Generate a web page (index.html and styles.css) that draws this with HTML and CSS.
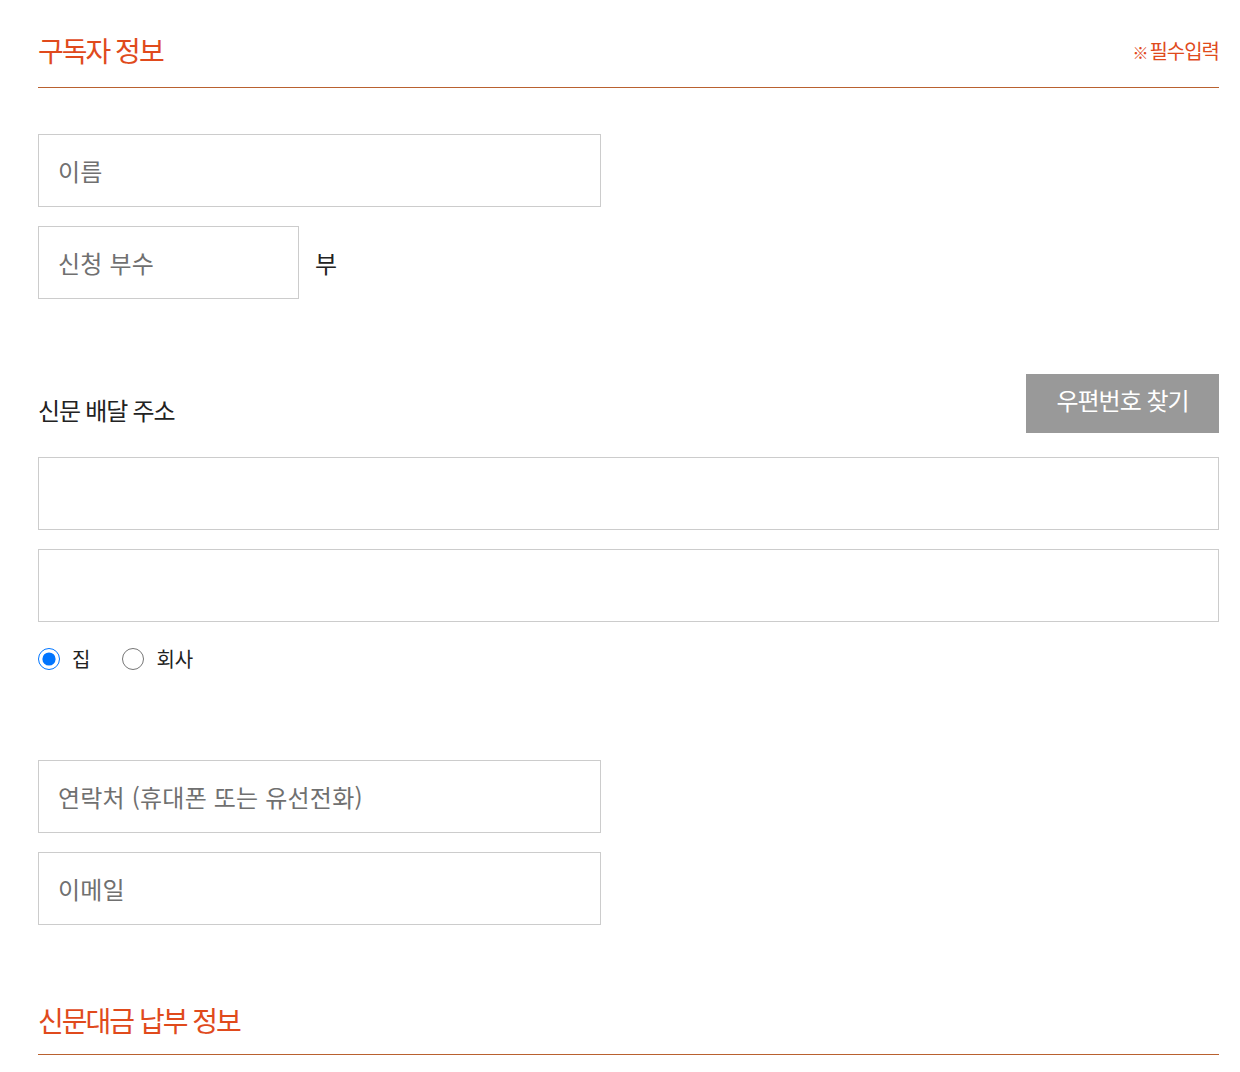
FILE: index.html
```html
<!DOCTYPE html>
<html lang="ko">
<head>
    <meta charset="UTF-8">
    <meta name="viewport" content="width=device-width, initial-scale=1.0">
    <title>구독 신청</title>
    <link rel="stylesheet" href="styles.css">
</head>
<body>
    <div class="wrap">
        <div class="sec-head">
            <h2>구독자 정보</h2>
            <span class="req"><b>※</b>필수입력</span>
        </div>

        <form class="sub-form">
            <input type="text" class="field half" placeholder="이름">
            <div class="count-row">
                <input type="text" class="field small" placeholder="신청 부수">
                <span class="unit">부</span>
            </div>

            <div class="addr-head">
                <label class="addr-label">신문 배달 주소</label>
                <button type="button" class="zip-btn">우편번호 찾기</button>
            </div>
            <input type="text" class="field full">
            <input type="text" class="field full">
            <div class="radios">
                <label class="radio"><input type="radio" name="place" checked> 집</label>
                <label class="radio"><input type="radio" name="place"> 회사</label>
            </div>

            <input type="text" class="field half contact" placeholder="연락처 (휴대폰 또는 유선전화)">
            <input type="text" class="field half" placeholder="이메일">
        </form>

        <div class="sec-head second">
            <h2>신문대금 납부 정보</h2>
        </div>
    </div>
</body>
</html>
```

FILE: styles.css
```css
body {
    margin: 0;
    font-family: "Noto Sans CJK KR", "Noto Sans", sans-serif;
    color: #222;
    background-color: #fff;
}
.wrap {
    width: 1181px;
    margin-left: 38px;
}
.sec-head {
    display: flex;
    justify-content: space-between;
    align-items: center;
    margin-top: 30px;
    padding-bottom: 17px;
    border-bottom: 1px solid #b9612f;
}
.sec-head h2 {
    margin: 0;
    font-size: 28px;
    font-weight: 400;
    line-height: 40px;
    color: #e04a1c;
    letter-spacing: -2px;
}
.sec-head .req {
    font-size: 20px;
    color: #e04a1c;
    letter-spacing: -1px;
}
.sec-head .req b {
    font-size: 16px;
    margin-right: 2px;
}
.sec-head.second {
    margin-top: 56px;
    padding-bottom: 14px;
}
.sub-form {
    display: flex;
    flex-direction: column;
    align-items: flex-start;
    padding-top: 46px;
}
.field {
    box-sizing: border-box;
    height: 73px;
    padding: 0 19px;
    border: 1px solid #ccc;
    font-family: inherit;
    font-size: 24px;
    letter-spacing: 0.2px;
    color: #222;
    outline: none;
    margin: 0 0 19px;
}
.field::placeholder {
    color: #707070;
}
.half {
    width: 563px;
}
.small {
    width: 261px;
    margin: 0;
}
.full {
    width: 100%;
}
.count-row {
    display: flex;
    align-items: center;
    gap: 16px;
}
.unit {
    font-size: 24px;
    color: #222;
}
.addr-head {
    display: flex;
    justify-content: space-between;
    align-items: flex-end;
    width: 100%;
    margin-top: 75px;
    margin-bottom: 24px;
}
.addr-label {
    font-size: 24px;
    letter-spacing: -1.2px;
    line-height: 34px;
    margin-bottom: 6px;
}
.zip-btn {
    width: 193px;
    height: 59px;
    padding: 0 0 8px;
    border: none;
    background-color: #999;
    color: #fff;
    font-family: inherit;
    font-size: 24px;
    letter-spacing: -1px;
    cursor: pointer;
}
.radios {
    display: flex;
    gap: 32px;
    margin-top: 3px;
    margin-bottom: 87px;
}
.radio {
    display: flex;
    align-items: center;
    gap: 12px;
    font-size: 20px;
}
.radio input {
    width: 22px;
    height: 22px;
    margin: 0;
}
```
